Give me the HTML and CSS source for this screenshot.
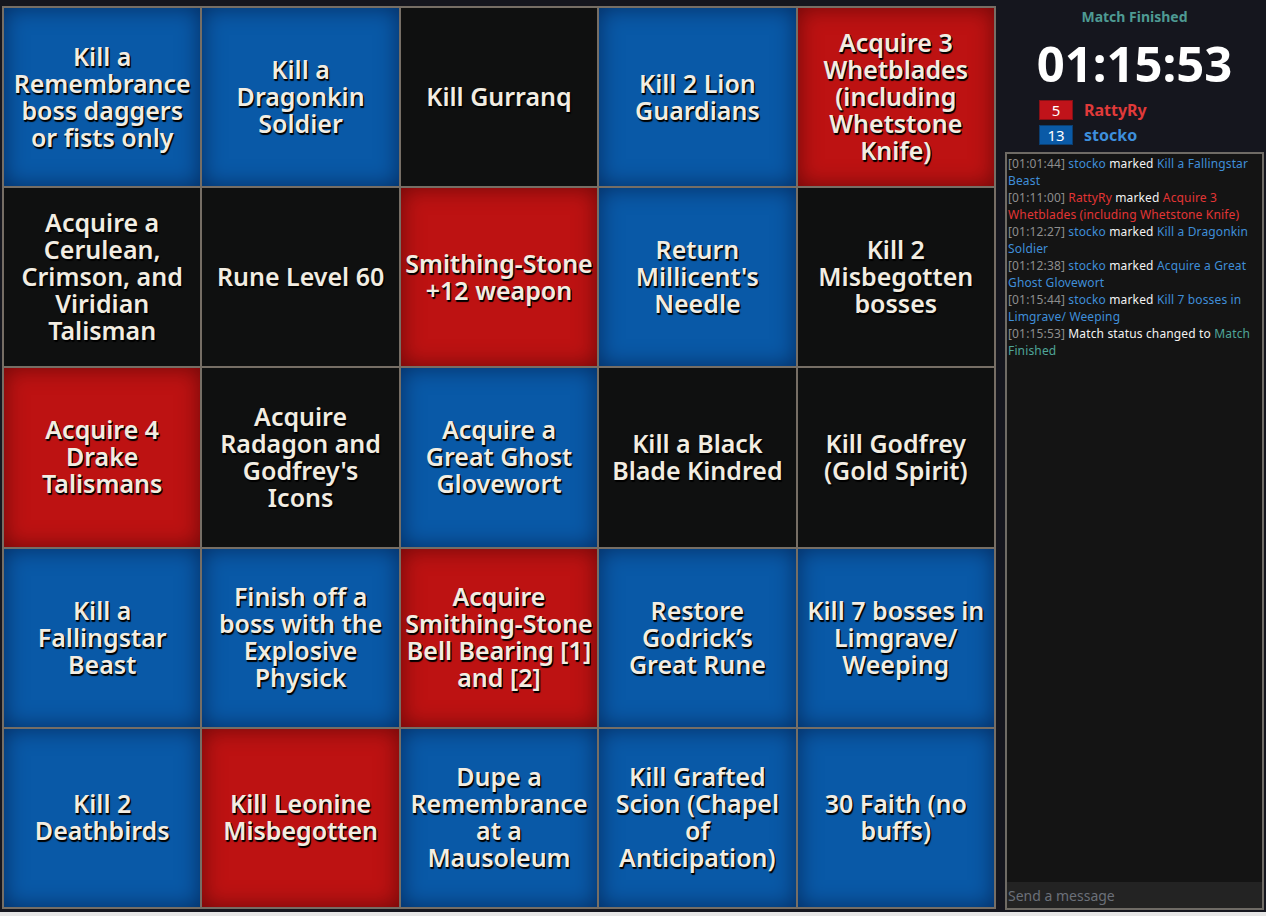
FILE: index.html
```html
<!DOCTYPE html>
<html>
<head>
<meta charset="utf-8">
<link rel="stylesheet" href="styles.css">
</head>
<body>
<div class="app">
  <div class="board">
    <div class="cell blue">Kill a<br>Remembrance<br>boss daggers<br>or fists only</div>
    <div class="cell blue">Kill a<br>Dragonkin<br>Soldier</div>
    <div class="cell black">Kill Gurranq</div>
    <div class="cell blue">Kill 2 Lion<br>Guardians</div>
    <div class="cell red">Acquire 3<br>Whetblades<br>(including<br>Whetstone<br>Knife)</div>

    <div class="cell black">Acquire a<br>Cerulean,<br>Crimson, and<br>Viridian<br>Talisman</div>
    <div class="cell black">Rune Level 60</div>
    <div class="cell red">Smithing-Stone<br>+12 weapon</div>
    <div class="cell blue">Return<br>Millicent's<br>Needle</div>
    <div class="cell black">Kill 2<br>Misbegotten<br>bosses</div>

    <div class="cell red">Acquire 4<br>Drake<br>Talismans</div>
    <div class="cell black">Acquire<br>Radagon and<br>Godfrey's<br>Icons</div>
    <div class="cell blue">Acquire a<br>Great Ghost<br>Glovewort</div>
    <div class="cell black">Kill a Black<br>Blade Kindred</div>
    <div class="cell black">Kill Godfrey<br>(Gold Spirit)</div>

    <div class="cell blue">Kill a<br>Fallingstar<br>Beast</div>
    <div class="cell blue">Finish off a<br>boss with the<br>Explosive<br>Physick</div>
    <div class="cell red">Acquire<br>Smithing-Stone<br>Bell Bearing [1]<br>and [2]</div>
    <div class="cell blue">Restore<br>Godrick’s<br>Great Rune</div>
    <div class="cell blue">Kill 7 bosses in<br>Limgrave/<br>Weeping</div>

    <div class="cell blue">Kill 2<br>Deathbirds</div>
    <div class="cell red">Kill Leonine<br>Misbegotten</div>
    <div class="cell blue">Dupe a<br>Remembrance<br>at a<br>Mausoleum</div>
    <div class="cell blue">Kill Grafted<br>Scion (Chapel<br>of<br>Anticipation)</div>
    <div class="cell blue">30 Faith (no<br>buffs)</div>
  </div>

  <div class="side">
    <div class="status">Match Finished</div>
    <div class="timer">01:15:53</div>
    <div class="scores">
      <div class="score"><span class="badge badge-red">5</span><span class="pname p-red">RattyRy</span></div>
      <div class="score"><span class="badge badge-blue">13</span><span class="pname p-blue">stocko</span></div>
    </div>
    <div class="chat">
      <div class="log">
        <p class="line"><span class="ts">[01:01:44]</span> <span class="c-blue">stocko</span> <span class="c-white">marked</span> <span class="c-blue">Kill a Fallingstar Beast</span></p>
        <p class="line"><span class="ts">[01:11:00]</span> <span class="c-red">RattyRy</span> <span class="c-white">marked</span> <span class="c-red">Acquire 3 Whetblades (including Whetstone Knife)</span></p>
        <p class="line"><span class="ts">[01:12:27]</span> <span class="c-blue">stocko</span> <span class="c-white">marked</span> <span class="c-blue">Kill a Dragonkin Soldier</span></p>
        <p class="line"><span class="ts">[01:12:38]</span> <span class="c-blue">stocko</span> <span class="c-white">marked</span> <span class="c-blue">Acquire a Great Ghost Glovewort</span></p>
        <p class="line"><span class="ts">[01:15:44]</span> <span class="c-blue">stocko</span> <span class="c-white">marked</span> <span class="c-blue">Kill 7 bosses in Limgrave/ Weeping</span></p>
        <p class="line"><span class="ts">[01:15:53]</span> <span class="c-white">Match status changed to</span> <span class="c-teal">Match Finished</span></p>
      </div>
      <input class="msg" type="text" placeholder="Send a message">
    </div>
  </div>
</div>
</body>
</html>
```

FILE: styles.css
```css
html {
  background: #e6e6e6;
  height: 100%;
}
body {
  margin: 0;
  height: 912px;
  background: #15161e;
  font-family: "Noto Sans", "Open Sans", sans-serif;
  overflow: hidden;
}
.app {
  display: flex;
  height: 100%;
}
.board {
  margin: 6px 0 0 2px;
  width: 994px;
  height: 903px;
  box-sizing: border-box;
  padding: 2px;
  gap: 2px;
  background: #766e65;
  display: grid;
  grid-template-columns: repeat(5, 1fr);
  grid-template-rows: repeat(5, 1fr);
}
.cell {
  display: flex;
  align-items: center;
  justify-content: center;
  text-align: center;
  white-space: nowrap;
  padding-bottom: 1px;
  color: #f2ede2;
  font-weight: 600;
  font-size: 25px;
  line-height: 27px;
  text-shadow: 1px 2px 1px #000, 1px 1px 0 #000;
}
.blue {
  background: #0959a7;
  box-shadow: inset 0 0 22px rgba(0, 10, 40, 0.55);
}
.red {
  background: #bd1212;
  box-shadow: inset 0 0 22px rgba(40, 0, 0, 0.55);
}
.black {
  background: #0f1010;
}
.side {
  flex: 1;
  margin-left: 9px;
  margin-right: 2px;
  display: flex;
  flex-direction: column;
}
.status {
  margin-top: 8px;
  text-align: center;
  color: #4e9a93;
  font-weight: 700;
  font-size: 14px;
  line-height: 18px;
}
.timer {
  margin-top: 6px;
  text-align: center;
  color: #ffffff;
  font-weight: 700;
  font-size: 49px;
  line-height: 62px;
}
.scores {
  margin-top: 6px;
  padding-left: 34px;
  display: flex;
  flex-direction: column;
  gap: 5px;
}
.score {
  display: flex;
  align-items: center;
  height: 20px;
}
.badge {
  width: 32px;
  height: 18px;
  box-sizing: content-box;
  color: #fff;
  font-size: 15px;
  line-height: 18px;
  text-align: center;
}
.badge-red {
  background: #c0131a;
  border: 1px solid #861016;
}
.badge-blue {
  background: #0a5aa7;
  border: 1px solid #0b3f72;
}
.pname {
  margin-left: 11px;
  font-weight: 700;
  font-size: 16px;
}
.p-red { color: #e03a3a; }
.p-blue { color: #3d8fdc; }
.chat {
  margin-top: 7px;
  height: 758px;
  box-sizing: border-box;
  border: 2px solid #6f6b65;
  background: #141414;
  display: flex;
  flex-direction: column;
}
.log {
  flex: 1;
  padding: 1px 2px 0 1px;
  font-size: 12px;
  line-height: 17px;
  letter-spacing: 0.15px;
}
.line {
  margin: 0;
}
.ts { color: #8e8e8e; }
.c-blue { color: #3f8ed8; }
.c-red { color: #e23535; }
.c-white { color: #f2f2f2; }
.c-teal { color: #4fa598; }
.msg {
  height: 26px;
  box-sizing: border-box;
  border: none;
  outline: none;
  background: #232323;
  color: #ddd;
  font-family: "Noto Sans", "Open Sans", sans-serif;
  font-size: 14px;
  padding: 0 1px;
  margin: 0;
}
.msg::placeholder {
  color: #6b7079;
}
```
